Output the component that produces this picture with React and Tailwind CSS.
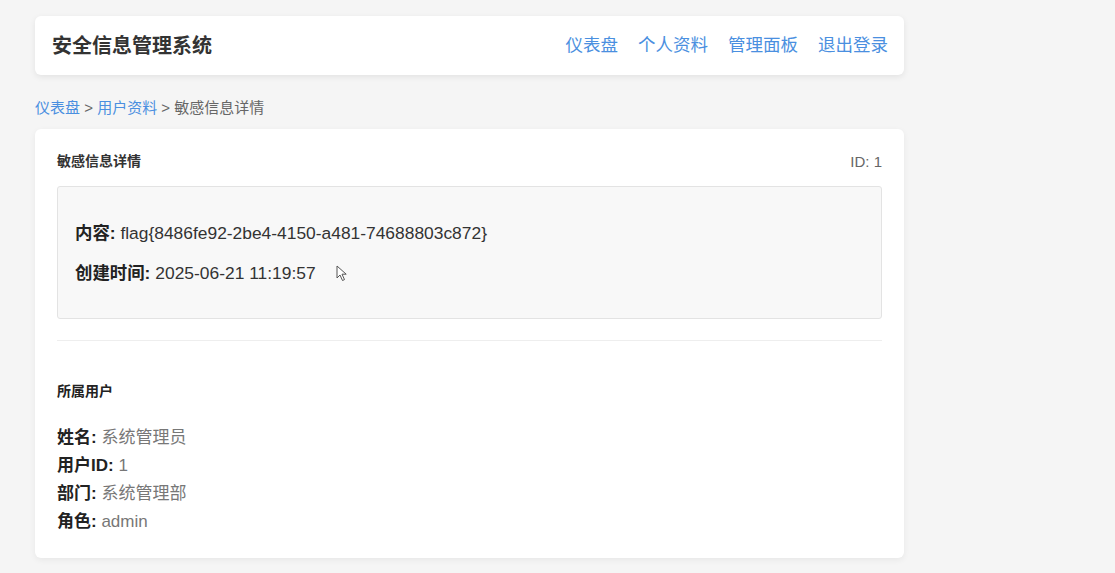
const FONT = { fontFamily: '"Liberation Sans", "Noto Sans CJK SC", sans-serif' }

const navLinks = ['仪表盘', '个人资料', '管理面板', '退出登录']

const userFields = [
  { label: '姓名', value: '系统管理员' },
  { label: '用户ID', value: '1' },
  { label: '部门', value: '系统管理部' },
  { label: '角色', value: 'admin' },
]

const Cursor = () => (
  <svg width="12" height="17" viewBox="0 0 12 17" className="ml-[20px] inline-block">
    <path d="M1 1 L1 13 L4 10 L6.5 15.5 L8.5 14.6 L6 9.2 L10.2 9.2 Z" fill="#fff" stroke="#555" strokeWidth="1" strokeLinejoin="round" />
  </svg>
)

const App = () => {
  return (
    <div className="min-h-[573px] bg-[#f5f5f5] pt-[16px] pb-[16px]" style={FONT}>
      <div className="ml-[35px] w-[869px]">
        <header className="flex h-[59px] items-center justify-between rounded-[6px] bg-white pl-[17px] pr-[16px] shadow-[0_2px_6px_rgba(0,0,0,0.08)]">
          <h1 className="text-[20px] font-bold text-[#333]">安全信息管理系统</h1>
          <nav className="flex gap-[20px]">
            {navLinks.map(link => (
              <a key={link} className="text-[17.5px] text-[#4a8fe0]">{link}</a>
            ))}
          </nav>
        </header>

        <div className="mt-[22px] text-[15px] text-[#666]">
          <a className="text-[#4a8fe0]">仪表盘</a>
          <span> &gt; </span>
          <a className="text-[#4a8fe0]">用户资料</a>
          <span> &gt; </span>
          <span>敏感信息详情</span>
        </div>

        <div className="mt-[9px] rounded-[6px] bg-white px-[22px] pt-[22px] pb-[22px] shadow-[0_2px_6px_rgba(0,0,0,0.06)]">
          <div className="flex items-center justify-between">
            <h2 className="text-[14px] font-bold text-[#333]">敏感信息详情</h2>
            <span className="text-[15px] text-[#666]">ID: 1</span>
          </div>

          <div className="mt-[13px] rounded-[3px] border border-[#e3e3e3] bg-[#f8f8f8] px-[17px] pt-[18px] pb-[17px]">
            <p className="my-[16px] text-[17.4px] leading-[24px] text-[#333]">
              <strong className="text-[#222]">内容:</strong> flag{'{'}8486fe92-2be4-4150-a481-74688803c872{'}'}
            </p>
            <p className="my-[16px] flex items-center text-[17.4px] leading-[24px] text-[#333]">
              <strong className="mr-[5px] text-[#222]">创建时间:</strong>2025-06-21 11:19:57
              <Cursor />
            </p>
          </div>

          <hr className="mt-[21px] border-t border-[#eee]" />

          <h3 className="mt-[40px] text-[14px] font-bold text-[#222]">所属用户</h3>

          <div className="mt-[22px]">
            {userFields.map(f => (
              <p key={f.label} className="text-[17px] leading-[28px] text-[#777]">
                <strong className="text-[#222]">{f.label}:</strong> {f.value}
              </p>
            ))}
          </div>
        </div>
      </div>
    </div>
  )
}

export default App
